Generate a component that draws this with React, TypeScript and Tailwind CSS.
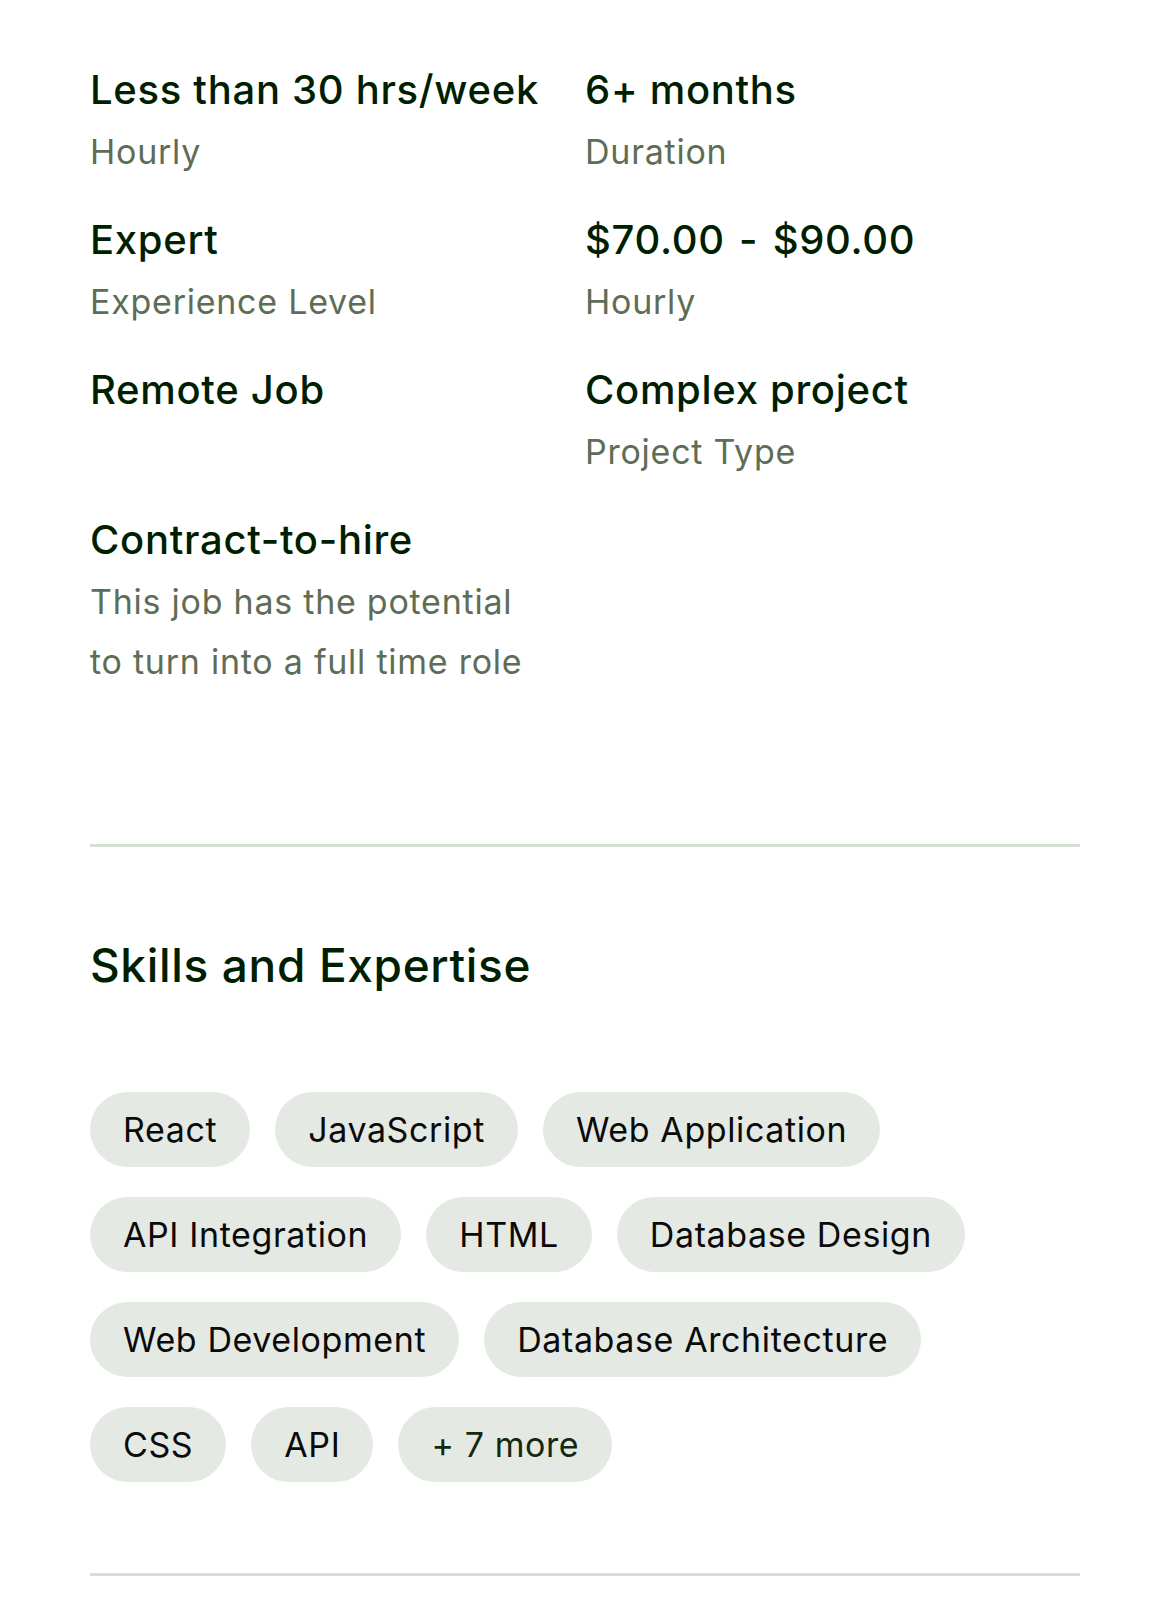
import React from "react";

const items: { title: string; sub?: string[] }[] = [
  { title: "Less than 30 hrs/week", sub: ["Hourly"] },
  { title: "6+ months", sub: ["Duration"] },
  { title: "Expert", sub: ["Experience Level"] },
  { title: "$70.00 - $90.00", sub: ["Hourly"] },
  { title: "Remote Job" },
  { title: "Complex project", sub: ["Project Type"] },
  { title: "Contract-to-hire", sub: ["This job has the potential", "to turn into a full time role"] },
];

const rows: string[][] = [
  ["React", "JavaScript", "Web Application"],
  ["API Integration", "HTML", "Database Design"],
  ["Web Development", "Database Architecture"],
  ["CSS", "API", "+ 7 more"],
];

export default function App() {
  return (
    <div
      className="w-[1170px] min-h-[1624px] bg-white px-[90px] pt-[60px] pb-[49px]"
      style={{ fontFamily: "Inter, 'Liberation Sans', sans-serif" }}
    >
      <div className="grid grid-cols-2 gap-y-[30px]">
        {items.map((it) => (
          <div key={it.title}>
            <div className="text-[40px] leading-[60px] font-medium text-[#001e00] tracking-[0.7px] whitespace-nowrap">
              {it.title === "$70.00 - $90.00" ? (
                <span>
                  $70.00 <span className="mx-[3px]">-</span> $90.00
                </span>
              ) : (
                it.title
              )}
            </div>
            {it.sub &&
              it.sub.map((s) => (
                <div
                  key={s}
                  className="text-[34px] leading-[60px] tracking-[0.75px] text-[#5e6d55] whitespace-nowrap translate-y-[2px]"
                >
                  {s}
                </div>
              ))}
          </div>
        ))}
      </div>

      <div className="mt-[154px] h-[3px] bg-[#d5e0d5]" />

      <h2 className="mt-[88px] text-[46px] leading-[60px] font-medium tracking-[0.65px] text-[#001e00]">
        Skills and Expertise
      </h2>

      <div className="mt-[97px] flex flex-col gap-y-[30px]">
        {rows.map((r, i) => (
          <div key={i} className="flex gap-x-[25px]">
            {r.map((s) => (
              <span
                key={s}
                className={
                  "h-[75px] px-[33px] rounded-full bg-[#e4e9e4] flex items-center text-[34px] tracking-[0.6px] whitespace-nowrap " +
                  (s.startsWith("+") ? "text-[#14280f]" : "text-[#0a0a0a]")
                }
              >
                {s}
              </span>
            ))}
          </div>
        ))}
      </div>

      <div className="mt-[91px] h-[3px] bg-[#d5e0d5]" />
    </div>
  );
}
